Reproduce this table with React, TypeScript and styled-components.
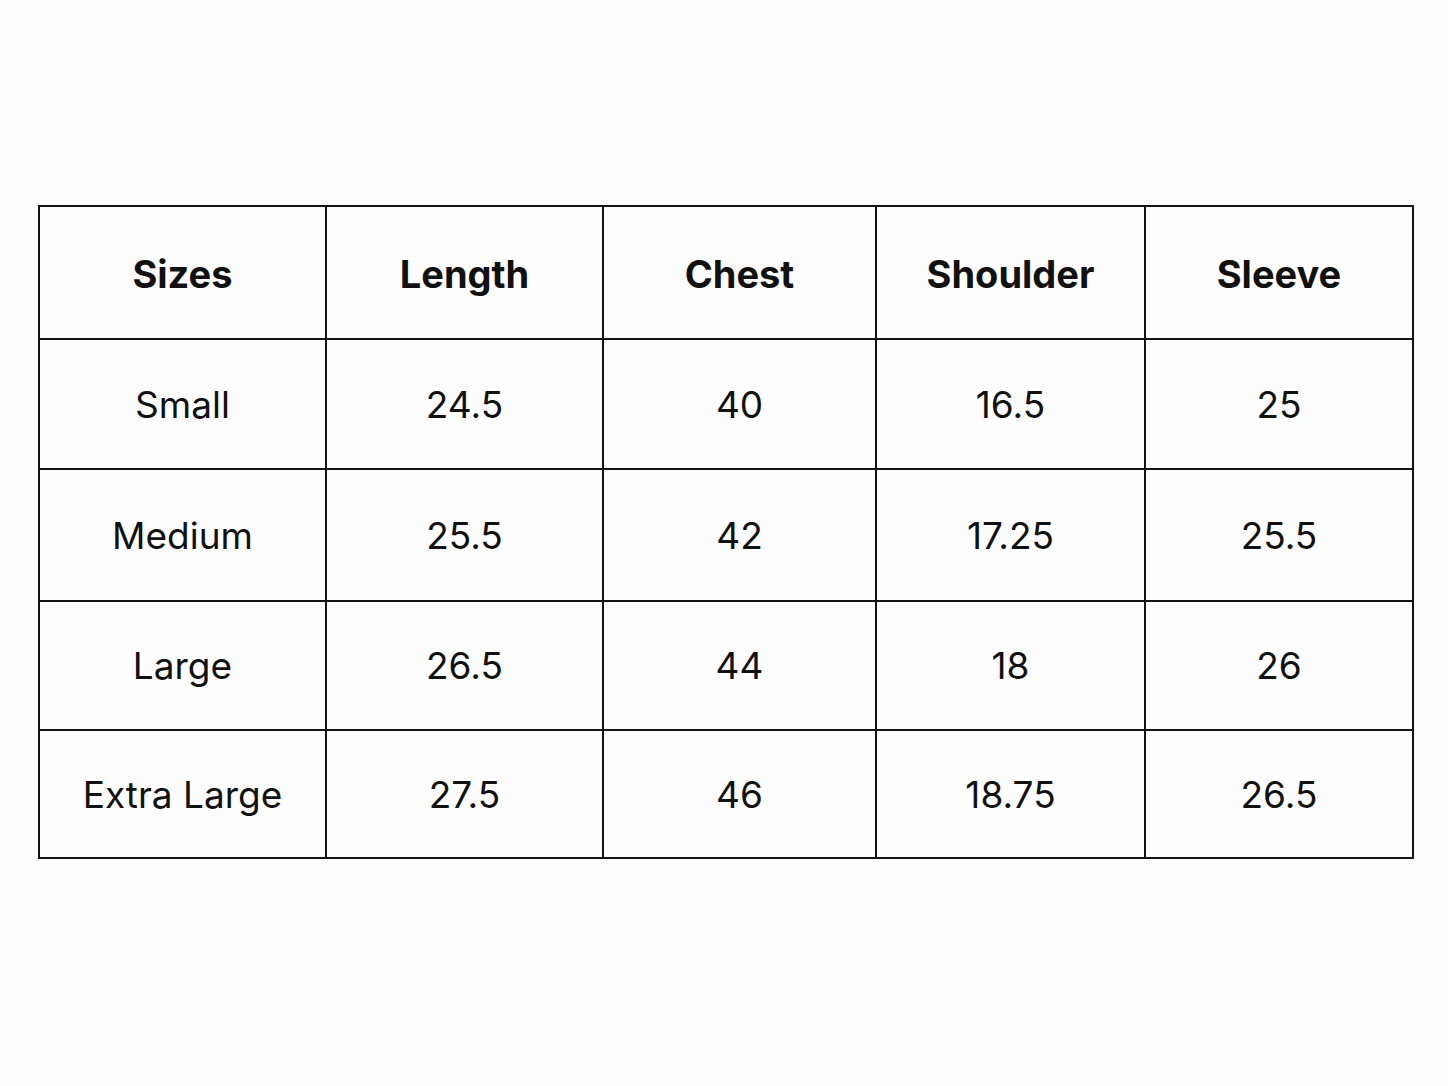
import React from "react";
import styled, { createGlobalStyle } from "styled-components";

const Global = createGlobalStyle`
  html, body {
    margin: 0;
    padding: 0;
    background: #fdfdfd;
  }
  body {
    font-family: Inter, "Noto Sans", "Liberation Sans", sans-serif;
    color: #111;
  }
`;

const Page = styled.div`
  width: 1448px;
  height: 1086px;
  box-sizing: border-box;
  padding: 205px 0 0 38px;
  background: #fdfdfd;
`;

const Grid = styled.div`
  display: grid;
  grid-template-columns: 287px 277px 273px 269px 268px;
  grid-template-rows: 133px 130px 132px 129px 128px;
  width: max-content;
  border-top: 2px solid #141414;
  border-left: 2px solid #141414;
`;

const Cell = styled.div<{ $head?: boolean }>`
  box-sizing: border-box;
  border-right: 2px solid #141414;
  border-bottom: 2px solid #141414;
  display: flex;
  align-items: center;
  justify-content: center;
  font-size: ${(p) => (p.$head ? "38px" : "37px")};
  font-weight: ${(p) => (p.$head ? 700 : 400)};
  color: #111;
  padding-top: ${(p) => (p.$head ? "2px" : "0")};
`;

const headers = ["Sizes", "Length", "Chest", "Shoulder", "Sleeve"];
const rows = [
  ["Small", "24.5", "40", "16.5", "25"],
  ["Medium", "25.5", "42", "17.25", "25.5"],
  ["Large", "26.5", "44", "18", "26"],
  ["Extra Large", "27.5", "46", "18.75", "26.5"],
];

export default function App() {
  return (
    <>
      <Global />
      <Page>
        <Grid>
          {headers.map((h) => (
            <Cell key={h} $head>
              {h}
            </Cell>
          ))}
          {rows.map((r, i) =>
            r.map((c, j) => <Cell key={`${i}-${j}`}>{c}</Cell>)
          )}
        </Grid>
      </Page>
    </>
  );
}
